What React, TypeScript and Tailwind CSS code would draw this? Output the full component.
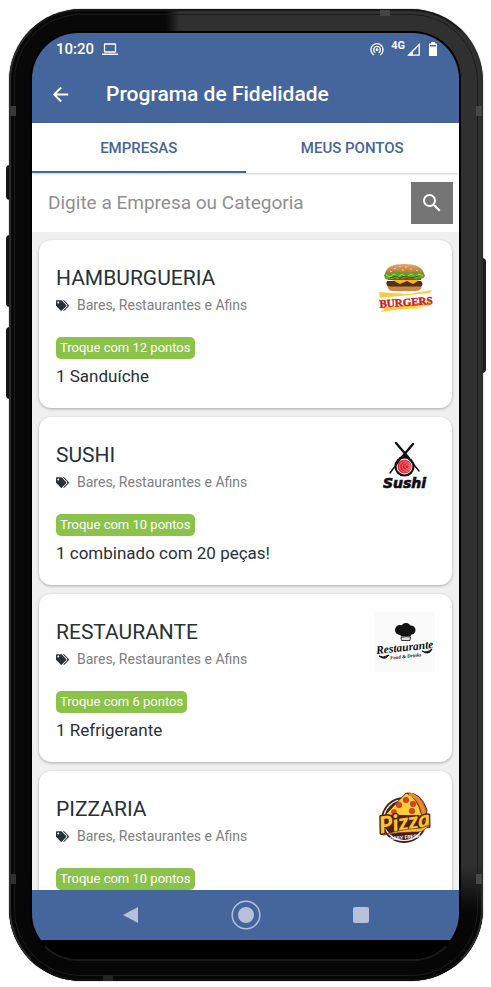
import type { ReactNode } from "react";
import { FaTags } from "react-icons/fa";
import { MdArrowBack, MdSearch, MdWifiTethering } from "react-icons/md";

type Company = {
  name: string;
  category: string;
  points: number;
  reward?: string;
  logo: ReactNode;
};

function BurgerLogo() {
  return (
    <svg viewBox="0 0 60 60" className="size-full" role="img" aria-label="Burgers">
      <defs>
        <linearGradient id="bun" x1="0" y1="0" x2="0" y2="1">
          <stop offset="0" stopColor="#e6a86a" />
          <stop offset="1" stopColor="#b9662a" />
        </linearGradient>
      </defs>
      <path d="M10 17C10 9 18 6 29 6S49 9 49 17Z" fill="url(#bun)" />
      <g fill="#fbe3b5">
        <ellipse cx="20" cy="10.500" rx="1" ry=".6" />
        <ellipse cx="25" cy="8.500" rx="1" ry=".6" />
        <ellipse cx="31" cy="9" rx="1" ry=".6" />
        <ellipse cx="36" cy="11" rx="1" ry=".6" />
        <ellipse cx="42" cy="12.500" rx="1" ry=".6" />
        <ellipse cx="28" cy="12" rx="1" ry=".6" />
        <ellipse cx="16" cy="13.500" rx="1" ry=".6" />
      </g>
      <path d="M12 27H47L46 31Q44 33 40 33H18Q14 33 13 30Z" fill="#cf8544" />
      <path d="M12 23H46Q49 26 46 28.500H14Q10 27 12 23Z" fill="#54301a" />
      <path d="M12 21H47L43 23L38 26L32 23L25 26L19 23Z" fill="#f5b62c" />
      <path d="M13 19H46V22H13Z" fill="#a83a1d" />
      <path
        d="M9 17Q12 13 17 15Q21 12 26 15Q30 13 35 15Q40 12 45 15Q49 13 50 18Q48 22 44 20Q42 23 38 20Q35 22 31 19Q28 22 25 20Q22 23 20 20Q17 22 14 21Q10 23 9 17Z"
        fill="#5da329"
      />
      <path d="M11 17L15 19L19 16L23 19L27 16L32 19L36 16L40 19L44 16L48 18" fill="none" stroke="#b1d558" strokeWidth="1" />
      <path d="M15 20L21 18L25 20L30 18L36 20L43 18" fill="none" stroke="#315f16" strokeWidth="1" />
      <path d="M4 34L16 35L34 36L57 32L55 35L5 40Z" fill="#f9ce3c" />
      <path d="M5 50L57 43L54 48L39 49L53 50L28 51L5 54L10 51Z" fill="#f9ce3c" />
      <text
        x="31"
        y="48"
        textAnchor="middle"
        transform="rotate(-4 30 44)"
        fontSize="11"
        fontWeight="700"
        className="font-['Liberation_Serif',serif]"
        fill="#c51b26"
        stroke="#c51b26"
        strokeWidth=".4"
      >
        BURGERS
      </text>
    </svg>
  );
}

function SushiLogo() {
  return (
    <svg viewBox="0 0 60 60" className="size-full" role="img" aria-label="Sushi">
      <g stroke="#111" strokeLinecap="round" fill="none">
        <path d="M21 8L33 22" strokeWidth="2.400" />
        <path d="M38 9L27 22" strokeWidth="2.400" />
        <path d="M27 22L15 38M32 21L44 36" strokeWidth="1.400" />
        <circle cx="29.500" cy="31.500" r="9" strokeWidth="2.200" />
        <path d="M25 23L30 20L34 23" strokeWidth="2" />
      </g>
      <circle cx="29.500" cy="31.500" r="7" fill="#e5222f" />
      <g fill="none" stroke="#ff9b9b" strokeWidth=".6">
        <circle cx="30" cy="31.500" r="5.500" />
        <circle cx="31" cy="31.500" r="3.800" />
        <circle cx="32" cy="31.500" r="2" />
      </g>
      <text
        x="29.500"
        y="53"
        textAnchor="middle"
        fontSize="14"
        fontWeight="700"
        fontStyle="italic"
        fill="#111"
        stroke="#111"
        strokeWidth=".7"
        className="font-['DejaVu_Sans','Liberation_Sans',sans-serif]"
      >
        Sushi
      </text>
    </svg>
  );
}

function RestaurantLogo() {
  return (
    <svg viewBox="0 0 60 60" className="size-full" role="img" aria-label="Restaurante Food & Drinks">
      <path d="M0 0H60V60H0Z" fill="#fafafa" />
      <g fill="#111">
        <circle cx="25" cy="18" r="5" />
        <circle cx="31" cy="16" r="5" />
        <circle cx="36" cy="18" r="4.500" />
        <path d="M24 20H37L35.500 24.500H26Z" />
        <path d="M26 25.500Q31 24 35.500 25L35 28.500H26.500Z" fill="#ddd" stroke="#111" strokeWidth=".8" />
        <path d="M4 44Q8 46.500 14 43Q10 49 4 44ZM47 39Q52 41.500 57 37Q54 44 47 39Z" stroke="#111" />
      </g>
      <g
        transform="rotate(-6 30 38)"
        textAnchor="middle"
        fill="#111"
        fontStyle="italic"
        fontWeight="700"
        className="font-['Liberation_Serif',serif]"
      >
        <text x="30" y="39" fontSize="11.500">
          Restaurante
        </text>
        <text x="30" y="46" fontSize="5">
          Food &amp; Drinks
        </text>
      </g>
    </svg>
  );
}

function PizzaLogo() {
  return (
    <svg viewBox="0 0 60 60" className="size-full" role="img" aria-label="Pizza daily fresh">
      <circle cx="29" cy="31" r="23" fill="#4b1d17" />
      <circle cx="29" cy="31" r="20.500" fill="none" stroke="#fff" strokeWidth="1.200" />
      <path d="M32 4Q46 3 52 21L51 28L44 30Z" fill="#cf6c20" stroke="#5a241a" />
      <path d="M31 4Q42 7 47 27L10 26Z" fill="#fbce37" stroke="#5a241a" />
      <path d="M34 5Q46 8 49 26" fill="none" stroke="#ea8a2f" strokeWidth="3.500" />
      <g fill="#d9422d" stroke="#9b2c1d" strokeWidth=".5">
        <circle cx="31" cy="11" r="2.800" />
        <circle cx="24" cy="16" r="2.800" />
        <circle cx="38" cy="15" r="2.800" />
        <circle cx="37" cy="22" r="2.800" />
        <circle cx="19" cy="23" r="2.500" />
      </g>
      <g textAnchor="middle" fontStyle="italic" transform="rotate(-8 30 36)">
        <text
          x="30"
          y="41"
          fontSize="23"
          fontWeight="900"
          fill="#fbc42d"
          stroke="#55241b"
          strokeWidth="3"
          strokeLinejoin="round"
          paintOrder="stroke"
          className="font-[Lato,sans-serif]"
        >
          Pizza
        </text>
      </g>
      <path d="M8 46Q26 40 47 39L54 36Q49 44 39 43Q23 43 8 46Z" fill="#fbc42d" stroke="#55241b" strokeWidth=".6" />
      <text x="30" y="50" textAnchor="middle" transform="rotate(-5 30 48)" fontSize="5" fontWeight="700" fill="#fff" className="font-[Roboto,sans-serif]">
        DAILY FRESH
      </text>
    </svg>
  );
}

const companies: Company[] = [
  { name: "HAMBURGUERIA", category: "Bares, Restaurantes e Afins", points: 12, reward: "1 Sanduíche", logo: <BurgerLogo /> },
  { name: "SUSHI", category: "Bares, Restaurantes e Afins", points: 10, reward: "1 combinado com 20 peças!", logo: <SushiLogo /> },
  { name: "RESTAURANTE", category: "Bares, Restaurantes e Afins", points: 6, reward: "1 Refrigerante", logo: <RestaurantLogo /> },
  { name: "PIZZARIA", category: "Bares, Restaurantes e Afins", points: 10, logo: <PizzaLogo /> },
];

function StatusBar() {
  return (
    <div className="flex h-8 items-center pr-[22px] pl-6 text-white">
      <span className="text-[15px] font-medium">10:20</span>
      <svg viewBox="0 0 16 12" className="ml-2 h-3 w-4" fill="none" stroke="currentColor" aria-hidden="true">
        <rect x="2.500" y="1" width="11" height="8" rx=".5" strokeWidth="1.300" />
        <path d="M0 11.200H16" strokeWidth="1.400" />
      </svg>
      <MdWifiTethering className="ml-auto size-4" />
      <span className="mb-1.5 ml-1.5 text-[11px] leading-4 font-bold">4G</span>
      <svg viewBox="0 0 13 13" className="ml-0.5 size-[13px]" aria-hidden="true">
        <path d="M1.500 12.200H12.200V1.500Z" fill="none" stroke="currentColor" strokeWidth="1.300" />
        <path d="M1 12.500L6 7.500V12.500Z" fill="currentColor" />
      </svg>
      <svg viewBox="0 0 8 14" className="ml-[9px] h-3.5 w-2" fill="currentColor" aria-hidden="true">
        <path d="M2 0H6V1.500H8V3H0V1.500H2ZM0 4.500H8V14H0Z" />
        <path d="M0 2H1V6H0ZM7 2H8V6H7Z" />
      </svg>
    </div>
  );
}

function CompanyCard({ company }: { company: Company }) {
  return (
    <li className="flex h-[168px] shrink-0 items-start justify-between rounded-xl bg-white px-[17px] shadow-[0_1px_3px_rgba(0,0,0,0.3)]">
      <div className="pt-6">
        <h2 className="text-[21px] leading-7 text-[#263238]">{company.name}</h2>
        <p className="mt-[3px] flex items-center gap-2 text-sm leading-5 text-[#808080]">
          <FaTags className="size-[13px] text-[#263238]" />
          {company.category}
        </p>
        <p className="mt-[22px] w-fit rounded-[5px] bg-[#8bc34a] px-1 text-[13px] leading-[22px] text-white">
          Troque com {company.points} pontos
        </p>
        {company.reward && <p className="mt-[5px] text-[17px] leading-6 text-[#263238]">{company.reward}</p>}
      </div>
      <div className="mt-[18px] size-[60px] shrink-0">{company.logo}</div>
    </li>
  );
}

function NavigationBar() {
  return (
    <nav className="grid h-[50px] shrink-0 grid-cols-[1fr_32px_1fr] items-center bg-[#45659d] text-[#b5c1db]">
      <button aria-label="Voltar" className="mr-[91px] justify-self-end">
        <svg viewBox="0 0 16 18" className="h-[18px] w-4" fill="currentColor">
          <path d="M15 1V17L0 9Z" />
        </svg>
      </button>
      <button aria-label="Início" className="justify-self-center">
        <svg viewBox="0 0 30 30" className="size-[30px]">
          <circle cx="15" cy="15" r="13.800" fill="none" stroke="currentColor" strokeWidth="1.500" />
          <circle cx="15" cy="15" r="8" fill="currentColor" />
        </svg>
      </button>
      <button aria-label="Recentes" className="ml-[91px] size-4 rounded-xs bg-[#b5c1db]" />
    </nav>
  );
}

export default function App() {
  return (
    <div className="h-screen bg-white pt-[9px] pr-2 pb-1.5 pl-[9px] font-[Roboto,sans-serif]">
      <div className="relative h-full">
        <i className="absolute top-[156px] -left-[3px] h-[35px] w-2 rounded-sm bg-[#151515]" />
        <i className="absolute top-[226px] -left-[3px] h-[72px] w-2 rounded-sm bg-[#151515]" />
        <i className="absolute top-[318px] -left-[3px] h-[72px] w-2 rounded-sm bg-[#151515]" />
        <i className="absolute top-[249px] -right-[3px] h-[115px] w-2 rounded-sm bg-[#202020]" />
        <div className="relative h-full overflow-hidden rounded-[72px] bg-linear-to-r from-[#080808] from-33% to-[#303030] to-36% shadow-[0_0_1px_#000]">
          <div className="absolute inset-0 bg-linear-to-b from-transparent from-88% to-[#060606] to-93%" />
          <div className="absolute inset-0 rounded-[72px] border-2 border-[#2b2b2b] border-t-[#181818] border-b-[#101010]" />
          <div className="absolute inset-[5px] rounded-[67px] border border-[#1c1c1c]" />
          <i className="absolute top-[97px] left-px h-2.5 w-1.5 bg-[#383838]" />
          <i className="absolute top-[97px] right-px h-2.5 w-1.5 bg-[#484848]" />
          <i className="absolute bottom-[97px] left-px h-2.5 w-1.5 bg-[#303030]" />
          <i className="absolute right-px bottom-[97px] h-2.5 w-1.5 bg-[#484848]" />
          <i className="absolute top-px right-[93px] h-1.5 w-2.5 bg-[#444]" />
          <i className="absolute bottom-0 left-[94px] h-1.5 w-2.5 bg-[#252525]" />
          <div className="relative h-full pt-[22px] pr-[22px] pb-5 pl-[21px]">
            <div className="flex h-full flex-col overflow-hidden rounded-[48px] border-2 border-black border-b-[#1b1b1b] bg-black">
              <header className="h-[90px] shrink-0 bg-[#45659d] text-white">
                <StatusBar />
                <div className="flex h-[58px] items-center pl-[17px]">
                  <button aria-label="Voltar">
                    <MdArrowBack className="size-[23px]" />
                  </button>
                  <h1 className="ml-[34px] text-[21px] leading-7 font-medium">Programa de Fidelidade</h1>
                </div>
              </header>
              <div
                role="tablist"
                className="relative grid h-[50px] shrink-0 grid-cols-2 bg-white text-[15px] font-medium text-[#45659d] shadow-[0_1px_2px_rgba(0,0,0,0.2)]"
              >
                <button role="tab" aria-selected="true" className="border-y-2 border-t-transparent border-b-[#45659d]">
                  EMPRESAS
                </button>
                <button role="tab" aria-selected="false">
                  MEUS PONTOS
                </button>
              </div>
              <form className="flex h-[59px] shrink-0 items-center bg-white pr-1.5 pl-4">
                <input
                  type="text"
                  aria-label="Empresa ou categoria"
                  placeholder="Digite a Empresa ou Categoria"
                  className="h-10 min-w-0 flex-1 text-[19px] outline-none placeholder:text-[#909090]"
                />
                <button type="button" aria-label="Pesquisar" className="grid size-[42px] place-items-center bg-[#757575] text-white">
                  <MdSearch className="size-6" />
                </button>
              </form>
              <ul className="flex min-h-0 flex-1 flex-col gap-[9px] overflow-hidden bg-[#f0f0f0] px-[7px] pt-2">
                {companies.map((company) => (
                  <CompanyCard key={company.name} company={company} />
                ))}
              </ul>
              <NavigationBar />
              <div className="h-[19px] shrink-0 bg-black" />
            </div>
          </div>
        </div>
      </div>
    </div>
  );
}
